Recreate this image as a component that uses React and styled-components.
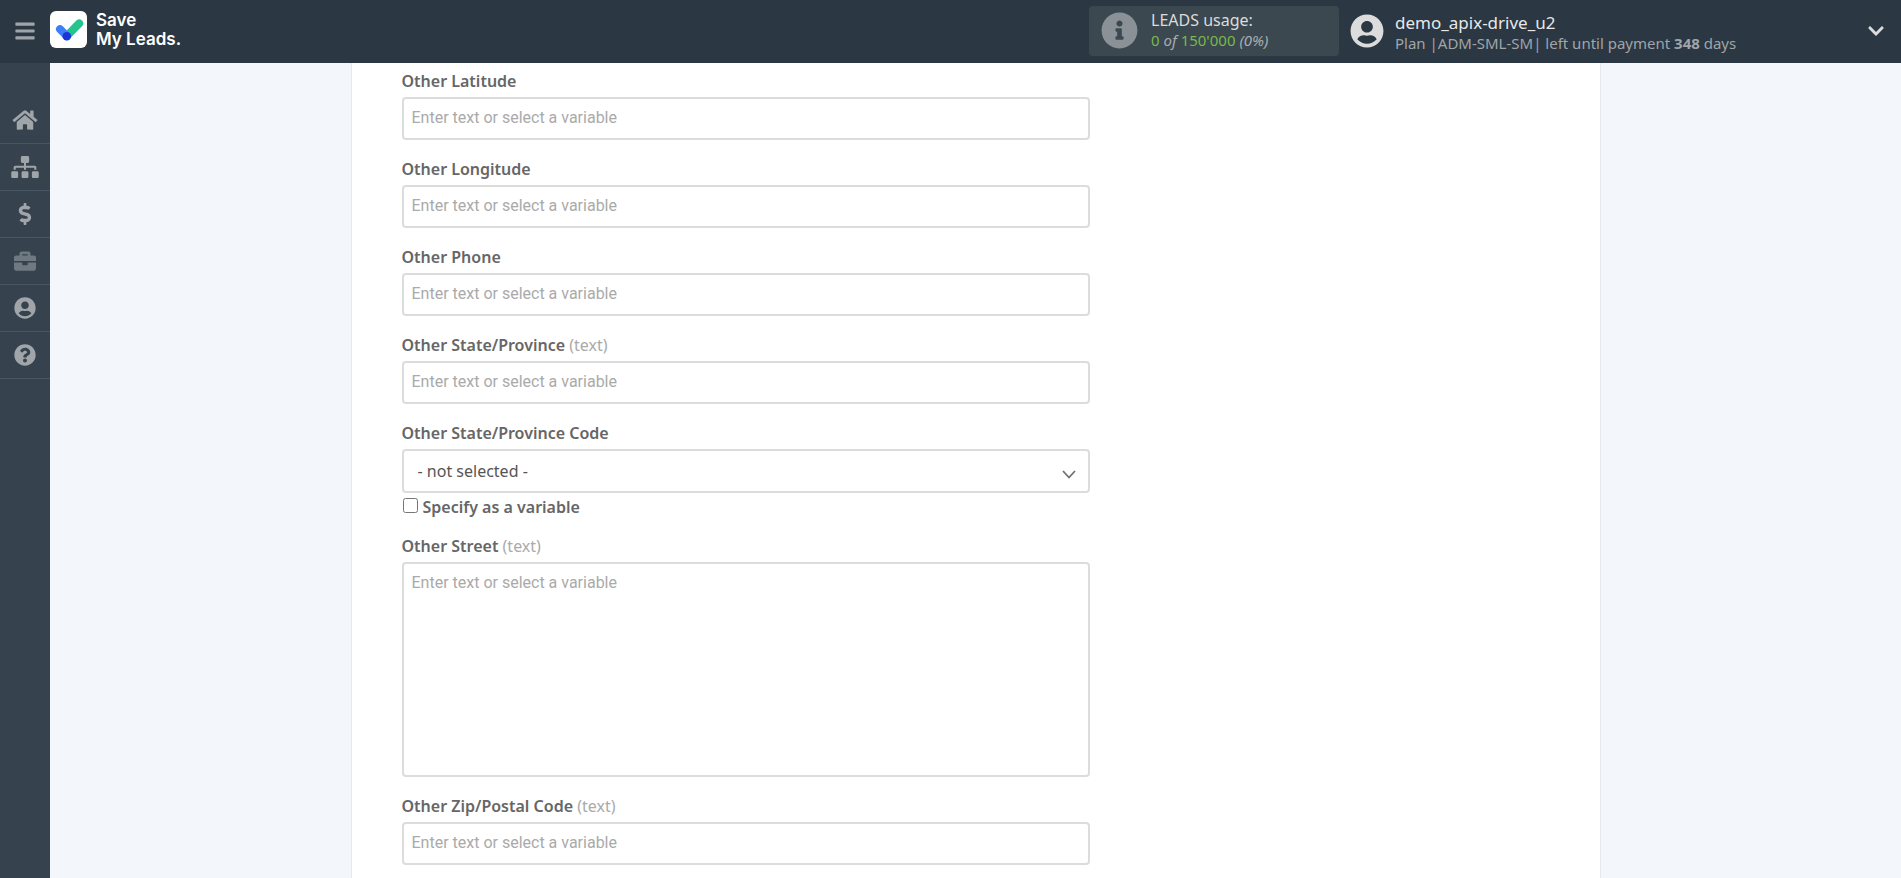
import React from 'react';
import styled, { createGlobalStyle } from 'styled-components';
import {
  FaBars,
  FaHome,
  FaSitemap,
  FaDollarSign,
  FaBriefcase,
  FaUserCircle,
  FaQuestionCircle,
  FaInfoCircle,
  FaChevronDown,
} from 'react-icons/fa';

const menu = [
  { icon: FaHome, label: 'Home' },
  { icon: FaSitemap, label: 'Connections' },
  { icon: FaDollarSign, label: 'Billing' },
  { icon: FaBriefcase, label: 'Business', dim: true },
  { icon: FaUserCircle, label: 'Profile' },
  { icon: FaQuestionCircle, label: 'Help' },
];

const hint = 'Enter text or select a variable';

const TextField = ({ id, label, note }) => (
  <Field>
    <Label htmlFor={id}>{label}{note && <Note> ({note})</Note>}</Label>
    <Input id={id} type="text" placeholder={hint} />
  </Field>
);

const Logo = () => (
  <LogoLink href="#home">
    <svg width="37" height="37" viewBox="0 0 37 37" aria-hidden="true">
      <rect width="37" height="37" rx="6" fill="#fff" />
      <path d="M16.8 25 29.2 12.4" stroke="#23c58d" strokeWidth="8" strokeLinecap="round" />
      <path d="M10 18.2 16.8 25" stroke="#3f7dfb" strokeWidth="8" strokeLinecap="round" />
      <circle cx="16.8" cy="25.2" r="4.3" fill="#1b35d6" />
    </svg>
    <LogoText>Save<br />My Leads.</LogoText>
  </LogoLink>
);

const App = () => {
  return (
    <Page>
      <GlobalStyle />

      <Header>
        <MenuButton type="button" aria-label="Toggle menu"><FaBars /></MenuButton>
        <Logo />
        <Usage>
          <FaInfoCircle />
          <UsageText>
            <UsageTitle>LEADS usage:</UsageTitle>
            <UsageValue><b>0</b> <i>of</i> <b>150'000</b> <i>(0%)</i></UsageValue>
          </UsageText>
        </Usage>
        <User>
          <FaUserCircle />
          <UserText>
            <UserName>demo_apix-drive_u2</UserName>
            <Plan>Plan |ADM-SML-SM| left until payment <strong>348</strong> days</Plan>
          </UserText>
        </User>
        <Expand type="button" aria-label="Open account menu"><FaChevronDown /></Expand>
      </Header>

      <Body>
        <Sidebar>
          {menu.map(({ icon: Icon, label, dim }) => (
            <SideLink href="#" key={label} aria-label={label} $dim={dim}><Icon /></SideLink>
          ))}
        </Sidebar>

        <Main>
          <Card>
            <Form>
              <TextField id="latitude" label="Other Latitude" />
              <TextField id="longitude" label="Other Longitude" />
              <TextField id="phone" label="Other Phone" />
              <TextField id="state" label="Other State/Province" note="text" />

              <Field>
                <Label htmlFor="stateCode">Other State/Province Code</Label>
                <SelectBox>
                  <Select id="stateCode">
                    <option>- not selected -</option>
                  </Select>
                  <svg width="14" height="9" viewBox="0 0 14 9" aria-hidden="true">
                    <path d="M1 1l6 6.5L13 1" fill="none" stroke="#707070" strokeWidth="1.8" />
                  </svg>
                </SelectBox>
                <CheckRow>
                  <input id="asVariable" type="checkbox" />
                  <label htmlFor="asVariable">Specify as a variable</label>
                </CheckRow>
              </Field>

              <Field>
                <Label htmlFor="street">Other Street<Note> (text)</Note></Label>
                <TextArea id="street" placeholder={hint} />
              </Field>

              <TextField id="zip" label="Other Zip/Postal Code" note="text" />
            </Form>
          </Card>
        </Main>
      </Body>
    </Page>
  )
}

export default App


const GlobalStyle = createGlobalStyle`
  *{ box-sizing: border-box; }

  body{ margin: 0; font-family: "Noto Sans", "Open Sans", sans-serif; font-size: 16px; color: #666; background-color: #f3f7fc; }
`;

const Page = styled.div`
  min-height: 100vh; display: flex; flex-direction: column;
`;

const Header = styled.header`
  height: 63px; padding-bottom: 2px; display: flex; align-items: center; background-color: #2b3742; flex: none;
`;

const MenuButton = styled.button`
  width: 50px; height: 50px; padding: 0; border: none; background: none; color: #a0a5a9; display: flex; align-items: center; justify-content: center; cursor: pointer;

  svg{ height: 22px; width: 22px; }
`;

const LogoLink = styled.a`
  display: flex; align-items: center; gap: 9px; padding-bottom: 2px; margin-right: auto; color: #fff; text-decoration: none;
`;

const LogoText = styled.span`
  font-family: Inter, "Noto Sans", sans-serif; font-size: 17px; font-weight: 600; line-height: 19px;
`;

const Usage = styled.div`
  width: 250px; height: 50px; padding: 0 12px; display: flex; align-items: center; gap: 13px; border-radius: 4px; background-color: #3b4850; flex: none;

  svg{ width: 37px; height: 37px; color: #8b9297; }
`;

const UsageText = styled.div`
  padding-bottom: 2px;
`;

const UsageTitle = styled.div`
  font-size: 16px; line-height: 20px; color: #dcdcdc;
`;

const UsageValue = styled.div`
  font-size: 15px; line-height: 20px; color: #a9aeb1;

  b{ font-weight: 400; color: #78b94b; }
`;

const User = styled.div`
  display: flex; align-items: center; gap: 11px; margin-left: 11px; width: 501px; flex: none;

  svg{ width: 34px; height: 34px; color: #dcdcdc; }
`;

const UserText = styled.div`
  padding-top: 4px;
`;

const UserName = styled.div`
  font-size: 17px; line-height: 20px; color: #e8e8e8;
`;

const Plan = styled.div`
  font-size: 15px; line-height: 20px; color: #a0a5a9;
`;

const Expand = styled.button`
  width: 50px; height: 50px; padding: 0; border: none; background: none; color: #dcdcdc; display: flex; align-items: center; justify-content: center; cursor: pointer;

  svg{ height: 18px; width: 18px; }
`;

const Body = styled.div`
  flex: 1; display: flex;
`;

const Sidebar = styled.nav`
  width: 50px; padding-top: 34px; background-color: #36424e; flex: none;
`;

const SideLink = styled.a`
  height: 47px; padding-bottom: 1px; display: flex; align-items: center; justify-content: center; border-bottom: 1px solid #4a5562; color: ${({ $dim }) => ($dim ? '#707981' : '#a0a5a9')};

  svg{ height: 22px; width: 28px; }
`;

const Main = styled.main`
  flex: 1; display: flex; justify-content: center;
`;

const Card = styled.section`
  width: 1250px; max-width: 100%; padding: 6px 50px 13px; background-color: #fff; border: solid #e6e8ea; border-width: 0 1px;
`;

const Form = styled.form`
  width: 60%; display: flex; flex-direction: column; gap: 17px;
`;

const Field = styled.div`
  display: flex; flex-direction: column;
`;

const Label = styled.label`
  margin-bottom: 4px; font-weight: 600; line-height: 24px;
`;

const Note = styled.span`
  font-weight: 400; color: #aaa;
`;

const Input = styled.input`
  height: 43px; padding: 0 8px 2px; border: 2px solid #dcdcdc; border-radius: 4px; background-color: #fff; font-family: Roboto, sans-serif; font-size: 16px; color: #666; outline: none;

  &::placeholder{ color: #aaa; opacity: 1; }
`;

const TextArea = styled(Input).attrs({ as: 'textarea' })`
  height: 215px; padding: 9px 8px; line-height: 20px; resize: none;
`;

const SelectBox = styled.div`
  display: grid; align-items: center;

  > *{ grid-area: 1 / 1; }

  svg{ justify-self: end; margin: 6px 14px 0 0; pointer-events: none; }
`;

const Select = styled.select`
  appearance: none; width: 100%; height: 44px; padding: 0 14px; border: 2px solid #dcdcdc; border-radius: 4px; background-color: #fff; font-family: inherit; font-size: 16px; color: #555; outline: none;
`;

const CheckRow = styled.div`
  display: flex; gap: 5px; margin-top: 4px; font-weight: 600; line-height: 20px;

  input{ width: 15px; height: 15px; margin: 1px 0 0 1px; }
`;
